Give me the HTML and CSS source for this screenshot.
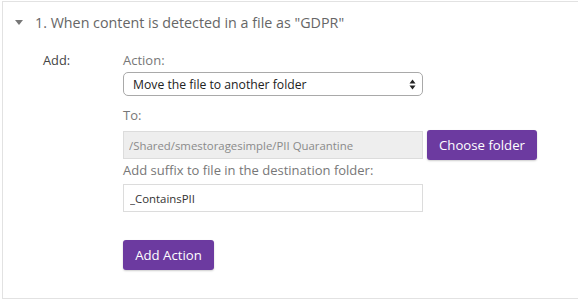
FILE: index.html
```html
<!DOCTYPE html>
<html lang="en">
<head>
    <meta charset="UTF-8">
    <meta name="viewport" content="width=device-width, initial-scale=1.0">
    <title>Rule actions</title>
    <link rel="stylesheet" href="styles.css">
</head>
<body>
    <!-- Rule panel -->
    <div class="rule-panel">
        <div class="rule-header">
            <span class="caret"></span>
            <h3>1. When content is detected in a file as "GDPR"</h3>
        </div>

        <div class="rule-body">
            <div class="row-label">Add:</div>
            <div class="fields">
                <label class="field-label">Action:</label>
                <div class="select-box">
                    <span>Move the file to another folder</span>
                    <svg class="select-arrows" width="7" height="11" viewBox="0 0 7 11">
                        <path d="M3.5 0.5 L6.5 4.5 H0.5 Z" fill="#222"/>
                        <path d="M3.5 10.5 L6.5 6.5 H0.5 Z" fill="#222"/>
                    </svg>
                </div>

                <label class="field-label to-label">To:</label>
                <div class="folder-row">
                    <input type="text" class="text-input disabled" value="/Shared/smestoragesimple/PII Quarantine" disabled>
                    <button class="purple-btn choose-btn">Choose folder</button>
                </div>

                <label class="field-label suffix-label">Add suffix to file in the destination folder:</label>
                <input type="text" class="text-input" value="_ContainsPII">

                <button class="purple-btn add-btn">Add Action</button>
            </div>
        </div>
    </div>
</body>
</html>
```

FILE: styles.css
```css
* {
    margin: 0;
    padding: 0;
    box-sizing: border-box;
    font-family: 'Open Sans', sans-serif;
}

body {
    background: #fff;
    overflow: hidden;
}

.rule-panel {
    margin: 1px -20px 0 2px;
    height: 298px;
    border: 1px solid #e2e2e2;
    border-right: none;
}

/* Header */
.rule-header {
    display: flex;
    align-items: center;
    height: 40px;
    padding-left: 12px;
}

.caret {
    width: 0;
    height: 0;
    border-left: 4px solid transparent;
    border-right: 4px solid transparent;
    border-top: 5px solid #777;
    margin-right: 12px;
    margin-top: 1px;
}

.rule-header h3 {
    font-size: 14.3px;
    font-weight: 400;
    color: #666;
}

/* Body */
.rule-body {
    display: grid;
    grid-template-columns: 80px 300px;
    padding: 9px 0 0 40px;
}

.row-label {
    font-size: 12.8px;
    color: #444;
    line-height: 18px;
}

.fields {
    display: flex;
    flex-direction: column;
    align-items: flex-start;
}

.field-label {
    font-size: 13px;
    color: #777;
    line-height: 18px;
}

.select-box {
    width: 300px;
    height: 24px;
    margin-top: 3px;
    border: 1px solid #a9a9a9;
    border-radius: 5px;
    display: flex;
    align-items: center;
    justify-content: space-between;
    padding: 0 6px 0 9px;
    font-size: 12.2px;
    color: #222;
}

.to-label {
    margin-top: 10px;
}

.folder-row {
    display: flex;
    align-items: center;
    gap: 4px;
    margin-top: 6px;
}

.text-input {
    width: 300px;
    height: 28px;
    border: 1px solid #dcdcdc;
    padding: 0 6px;
    font-size: 11.4px;
    color: #333;
    background: #fff;
    outline: none;
}

.text-input.disabled {
    background: #eeeeee;
    color: #8a8a8a;
    padding-left: 5px;
}

.suffix-label {
    margin-top: 1px;
    margin-bottom: 5px;
}

.purple-btn {
    background: #6c3aa0;
    color: #fff;
    border: none;
    border-radius: 3px;
    font-size: 13.2px;
    cursor: pointer;
    height: 30px;
    box-shadow: 0 1px 2px rgba(0, 0, 0, 0.2);
}

.choose-btn {
    width: 110px;
}

.add-btn {
    width: 91px;
    margin-top: 28px;
}
```
